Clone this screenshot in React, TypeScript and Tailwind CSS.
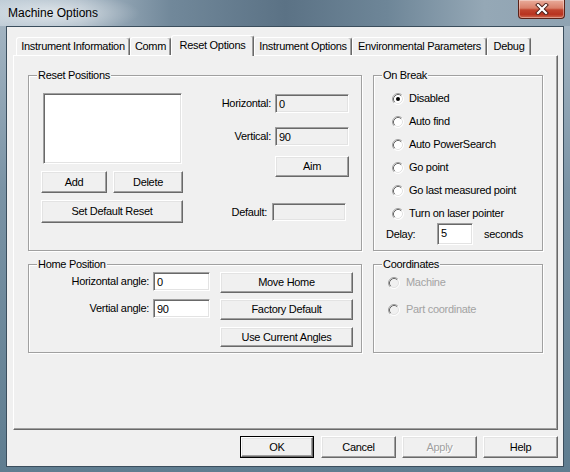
import React from 'react';

const btn =
  'flex items-center justify-center bg-[#f0f0f0] border border-t-white border-l-white border-r-[#696969] border-b-[#696969] shadow-[inset_-1px_-1px_0_#a0a0a0,inset_1px_1px_0_#e3e3e3]';
const sunken =
  'border border-t-[#a0a0a0] border-l-[#a0a0a0] border-r-white border-b-white shadow-[inset_1px_1px_0_#696969,inset_-1px_-1px_0_#e3e3e3] pl-[3px] flex items-start pt-[1px]';

function Radio({ checked, disabled }: { checked?: boolean; disabled?: boolean }) {
  return (
    <svg width="12" height="12" viewBox="0 0 12 12" className="shrink-0">
      <circle cx="6" cy="6" r="5.5" fill={disabled ? '#f0f0f0' : '#fff'} />
      <path d="M2.11 9.89A5.5 5.5 0 0 1 9.89 2.11" stroke="#a0a0a0" fill="none" />
      <path d="M9.89 2.11A5.5 5.5 0 0 1 2.11 9.89" stroke="#fff" fill="none" />
      <path d="M2.82 9.18A4.5 4.5 0 0 1 9.18 2.82" stroke="#696969" fill="none" />
      <path d="M9.18 2.82A4.5 4.5 0 0 1 2.82 9.18" stroke="#e3e3e3" fill="none" />
      {checked && <circle cx="6" cy="6" r="2" fill="#000" />}
    </svg>
  );
}

function Group({ label, className, children }: { label: string; className?: string; children?: React.ReactNode }) {
  return (
    <div className={`relative border border-[#a0a0a0] shadow-[inset_1px_1px_0_#fff,1px_1px_0_#fff] ${className ?? ''}`}>
      <span className="absolute left-[8px] top-[-7px] bg-[#f0f0f0] px-[1px] leading-[13px]">{label}</span>
      {children}
    </div>
  );
}

const tabs = [
  { name: 'Instrument Information', w: 'w-[114px]' },
  { name: 'Comm', w: 'w-[41px]' },
  { name: 'Reset Options', w: 'w-[83px]', active: true },
  { name: 'Instrument Options', w: 'w-[98px]' },
  { name: 'Environmental Parameters', w: 'w-[135px]' },
  { name: 'Debug', w: 'w-[44px]' },
];

const breakOptions = ['Disabled', 'Auto find', 'Auto PowerSearch', 'Go point', 'Go last measured point', 'Turn on laser pointer'];

export default function App() {
  return (
    <div className="w-[570px] h-[472px] flex flex-col overflow-hidden bg-[linear-gradient(180deg,#a9b9c6_0%,#7a93a5_40%,#5f7d90_100%)] font-['Liberation_Sans',Arial,sans-serif] text-[11px] tracking-[-0.3px] text-black">
      {/* Title bar */}
      <div className="h-[26px] flex justify-between items-start bg-[radial-gradient(ellipse_85px_20px_at_55px_13px,rgba(255,255,255,0.6),transparent),linear-gradient(90deg,#bccad5_0%,#a9b9c6_14%,#71889a_30%,#5b7285_50%,#6e8698_68%,#95a8b6_85%,#8fa3b2_100%)]">
        <span className="ml-[8px] mt-[5px] text-[12px] tracking-normal leading-[16px]">Machine Options</span>
        <div className="mr-[5px] w-[47px] h-[19px] rounded-b-[4px] border border-t-0 border-[#5a2218] bg-[linear-gradient(180deg,#e9ac9b_0%,#d9806a_45%,#c0442e_55%,#b8331f_80%,#cf6a50_100%)] flex items-center justify-center shadow-[inset_0_0_0_1px_rgba(255,255,255,0.35)]">
          <svg width="14" height="12" viewBox="0 0 14 12">
            <path d="M3 2L11 10M11 2L3 10" stroke="#4a1e18" strokeWidth="4" strokeLinecap="square" />
            <path d="M3 2L11 10M11 2L3 10" stroke="#fff" strokeWidth="2.2" strokeLinecap="square" />
          </svg>
        </div>
      </div>

      {/* Client */}
      <div className="flex-1 ml-[6px] mr-[6px] mb-[5px] border border-[#3b4e5d] bg-[#f0f0f0] flex flex-col">
        {/* Tabs */}
        <div className="h-[20px] mt-[8px] pl-[9px] flex items-end">
          {tabs.map((t) =>
            t.active ? (
              <div
                key={t.name}
                className={`${t.w} h-[21px] mb-[-1px] relative z-10 bg-[#f0f0f0] rounded-t-[3px] border border-b-0 border-t-white border-l-white border-r-[#696969] shadow-[inset_-1px_0_0_#a0a0a0] flex items-center justify-center pb-[2px]`}
              >
                {t.name}
              </div>
            ) : (
              <div
                key={t.name}
                className={`${t.w} h-[18px] bg-[#f0f0f0] rounded-t-[3px] border border-b-0 border-t-white border-l-white border-r-[#696969] shadow-[inset_-1px_0_0_#a0a0a0] flex items-center justify-center`}
              >
                {t.name}
              </div>
            )
          )}
        </div>

        {/* Panel */}
        <div className="ml-[6px] w-[545px] h-[375px] border border-t-white border-l-white border-r-[#696969] border-b-[#696969] shadow-[inset_-1px_-1px_0_#a0a0a0] pl-[14px] pt-[19px]">
          <div className="grid grid-cols-[334px_170px] grid-rows-[176px_89px] gap-x-[11px] gap-y-[13px]">
            {/* Reset Positions */}
            <Group label="Reset Positions" className="flex">
              <div className="pl-[12px] pt-[17px] flex flex-col">
                <div className="ml-[2px] w-[139px] h-[71px] bg-white border border-t-[#a0a0a0] border-l-[#a0a0a0] border-r-white border-b-white shadow-[inset_1px_1px_0_#696969,inset_-1px_-1px_0_#e3e3e3]" />
                <div className="mt-[7px] flex gap-[6px]">
                  <div className={`${btn} w-[66px] h-[22px]`}>Add</div>
                  <div className={`${btn} w-[70px] h-[22px]`}>Delete</div>
                </div>
                <div className={`${btn} mt-[7px] w-[142px] h-[23px]`}>Set Default Reset</div>
              </div>
              <div className="ml-auto pr-[12px] pt-[18px] flex flex-col items-end">
                <div className="flex items-center gap-[4px] h-[19px]">
                  <span>Horizontal:</span>
                  <div className={`${sunken} w-[74px] h-[19px] bg-[#f0f0f0]`}>0</div>
                </div>
                <div className="mt-[14px] flex items-center gap-[4px] h-[19px]">
                  <span>Vertical:</span>
                  <div className={`${sunken} w-[74px] h-[19px] bg-[#f0f0f0]`}>90</div>
                </div>
                <div className={`${btn} mt-[10px] w-[74px] h-[21px]`}>Aim</div>
                <div className="mt-[26px] mr-[3px] flex items-center gap-[5px] h-[18px]">
                  <span>Default:</span>
                  <div className={`${sunken} w-[74px] h-[18px] bg-[#f0f0f0]`} />
                </div>
              </div>
            </Group>

            {/* On Break */}
            <Group label="On Break" className="pt-[11px]">
              {breakOptions.map((o, i) => (
                <div key={o} className="h-[23px] pl-[18px] flex items-center gap-[5px]">
                  <Radio checked={i === 0} />
                  <span>{o}</span>
                </div>
              ))}
              <div className="mt-[-2px] h-[22px] pl-[12px] flex items-center">
                <span className="w-[51px]">Delay:</span>
                <div className={`${sunken} w-[36px] h-[22px] bg-white`}>5</div>
                <span className="ml-[11px]">seconds</span>
              </div>
            </Group>

            {/* Home Position */}
            <Group label="Home Position" className="flex">
              <div className="w-[181px] pt-[7px] flex flex-col">
                <div className="h-[19px] flex items-center justify-end gap-[4px]">
                  <span>Horizontal angle:</span>
                  <div className={`${sunken} w-[57px] h-[19px] bg-white`}>0</div>
                </div>
                <div className="mt-[8px] h-[19px] flex items-center justify-end gap-[4px]">
                  <span>Vertial angle:</span>
                  <div className={`${sunken} w-[57px] h-[19px] bg-white`}>90</div>
                </div>
              </div>
              <div className="ml-[10px] pt-[7px] flex flex-col">
                <div className={`${btn} w-[133px] h-[21px]`}>Move Home</div>
                <div className={`${btn} mt-[6px] w-[133px] h-[21px]`}>Factory Default</div>
                <div className={`${btn} mt-[7px] w-[133px] h-[20px]`}>Use Current Angles</div>
              </div>
            </Group>

            {/* Coordinates */}
            <Group label="Coordinates" className="pt-[6px]">
              <div className="h-[23px] pl-[14px] flex items-center gap-[6px] text-[#a3a3a3]">
                <Radio disabled />
                <span>Machine</span>
              </div>
              <div className="mt-[4px] h-[23px] pl-[14px] flex items-center gap-[6px] text-[#a3a3a3]">
                <Radio disabled />
                <span>Part coordinate</span>
              </div>
            </Group>
          </div>
        </div>

        {/* Dialog buttons */}
        <div className="mt-[6px] mr-[5px] flex justify-end">
          <div className="w-[74px] h-[22px] border border-black flex">
            <div className={`${btn} flex-1`}>OK</div>
          </div>
          <div className={`${btn} ml-[7px] w-[75px] h-[22px]`}>Cancel</div>
          <div className={`${btn} ml-[6px] w-[75px] h-[22px] text-[#a0a0a0] [text-shadow:1px_1px_0_#fff]`}>Apply</div>
          <div className={`${btn} ml-[6px] w-[75px] h-[22px]`}>Help</div>
        </div>
      </div>
    </div>
  );
}
